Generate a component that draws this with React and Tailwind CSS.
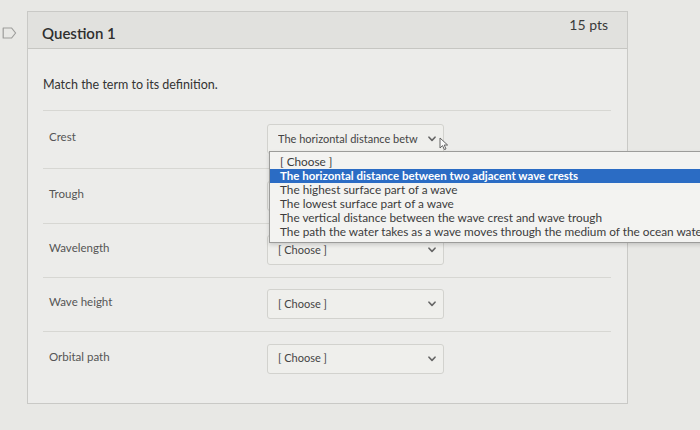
import React from "react";

const rows = [
  { label: "Crest", value: "The horizontal distance betw", open: true, h: "h-[58px]" },
  { label: "Trough", value: "[ Choose ]", h: "h-[55px]" },
  { label: "Wavelength", value: "[ Choose ]", h: "h-[54px]" },
  { label: "Wave height", value: "[ Choose ]", h: "h-[54px]" },
  { label: "Orbital path", value: "[ Choose ]", h: "h-[55px]" },
];

const options = [
  "[ Choose ]",
  "The horizontal distance between two adjacent wave crests",
  "The highest surface part of a wave",
  "The lowest surface part of a wave",
  "The vertical distance between the wave crest and wave trough",
  "The path the water takes as a wave moves through the medium of the ocean water",
];

function Chevron() {
  return (
    <svg width="8" height="6" viewBox="0 0 8 6" className="shrink-0">
      <path d="M1 1.2 L4 4.4 L7 1.2" fill="none" stroke="#666" strokeWidth="1.6" strokeLinecap="round" strokeLinejoin="round" />
    </svg>
  );
}

function Select({ value, open }) {
  return (
    <div className="relative w-[177px] h-[30px] ml-[218px] shrink-0">
      <div className="w-full h-full flex items-center justify-between pl-[10px] pr-[7px] border border-[#d2d2ce] rounded-[3px] bg-[#efefec]">
        <span className="text-[11px] text-[#444] whitespace-nowrap overflow-hidden">{value}</span>
        <Chevron />
      </div>
      {open && (
        <svg width="10" height="14" viewBox="0 0 10 14" className="absolute left-[172px] top-[13px]">
          <path d="M1 1 L1 11 L3.5 8.6 L5.4 12.6 L7 11.9 L5.2 8 L8.6 8 Z" fill="#fafafa" stroke="#555" strokeWidth="0.9" strokeLinejoin="round" />
        </svg>
      )}
    </div>
  );
}

export default function App() {
  return (
    <div className="relative w-[700px] h-[430px] overflow-hidden bg-[#e8e8e5] pt-[11px]" style={{ fontFamily: "Lato, 'Open Sans', sans-serif" }}>
      <div className="absolute left-[2px] top-[27px]">
        <svg width="15" height="12" viewBox="0 0 15 12">
          <path d="M1.2 1 H9.6 L13.6 6 L9.6 11 H1.2 Z" fill="none" stroke="#9d9d9b" strokeWidth="1.2" strokeLinejoin="round" />
        </svg>
      </div>
      <div className="ml-[27px] w-[601px] h-[393px] border border-[#c9c9c6] bg-[#ececea] flex flex-col">
        <div className="h-[37px] bg-[#e1e1de] border-b border-[#c6c6c2] flex justify-between pl-[14px] pr-[19px]">
          <div className="pt-[14px] text-[15px] font-semibold text-[#2f2f2f] leading-none">Question 1</div>
          <div className="pt-[6px] text-[14px] text-[#3a3a3a] leading-none">15 pts</div>
        </div>
        <div className="pl-[15px] pr-[16px] pt-[30px]">
          <div className="text-[12.5px] text-[#333] leading-none h-[14px]">Match the term to its definition.</div>
          <div className="mt-[17px]">
            {rows.map((r) => (
              <div key={r.label} className={"border-t border-[#d7d7d3] flex items-center pb-[1px] " + r.h}>
                <span className="w-[0px] pl-[6px] text-[11.5px] text-[#555] whitespace-nowrap -mt-[4px]">{r.label}</span>
                <Select value={r.value} open={r.open} />
              </div>
            ))}
          </div>
        </div>
      </div>
      <div className="absolute left-[269px] top-[151px] w-[460px] h-[92px] border border-[#9c9c9a] bg-[#f3f3f1] shadow-[0_2px_4px_rgba(0,0,0,0.15)] pt-[3px]">
        {options.map((o, i) => (
          <div
            key={o}
            className={
              i === 1
                ? "h-[14px] leading-[14px] pl-[10px] text-[11.5px] whitespace-nowrap bg-[#2b6cc4] text-white font-bold"
                : "h-[14px] leading-[14px] pl-[10px] text-[11.8px] whitespace-nowrap text-[#3c3c3c]"
            }
          >
            {o}
          </div>
        ))}
      </div>
    </div>
  );
}
